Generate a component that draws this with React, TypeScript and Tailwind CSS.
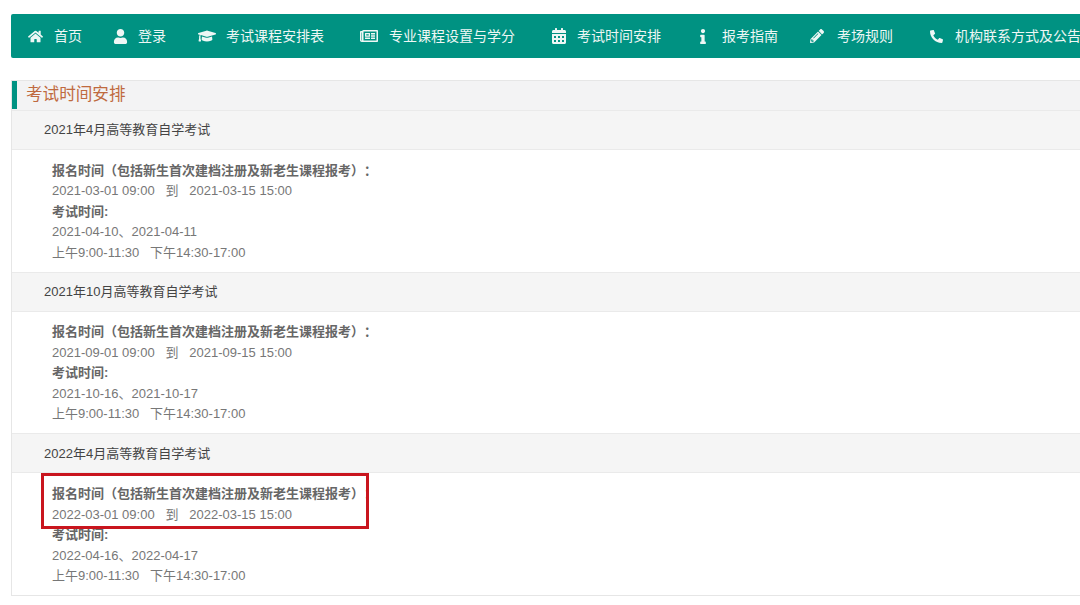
import { FaCalendarAlt, FaGraduationCap, FaHome, FaInfo, FaPencilAlt, FaPhone, FaRegNewspaper, FaUser } from 'react-icons/fa'
import type { ReactNode } from 'react'

const navItems: { label: string; icon: ReactNode; box: string }[] = [
  { label: '首页', icon: <FaHome className="size-[15px]" />, box: 'w-[102px] pl-[17px] gap-[11px]' },
  { label: '登录', icon: <FaUser className="size-[15px]" />, box: 'w-[85px] gap-[10px]' },
  { label: '考试课程安排表', icon: <FaGraduationCap className="size-[18px]" />, box: 'w-[162px] gap-[10px]' },
  { label: '专业课程设置与学分', icon: <FaRegNewspaper className="size-[18px]" />, box: 'w-[191px] gap-[11px]' },
  { label: '考试时间安排', icon: <FaCalendarAlt className="size-[16px]" />, box: 'w-[149px] gap-[10px]' },
  { label: '报考指南', icon: <FaInfo className="h-[15px] w-[6px]" />, box: 'w-[110px] gap-[16px]' },
  { label: '考场规则', icon: <FaPencilAlt className="size-[14px]" />, box: 'w-[120px] gap-[13px]' },
  { label: '机构联系方式及公告', icon: <FaPhone className="size-[13px] -scale-x-100" />, box: 'w-[160px] gap-[12px]' },
]

const sessions = [
  { title: '2021年4月高等教育自学考试', signup: '2021-03-01 09:00   到   2021-03-15 15:00', exam: '2021-04-10、2021-04-11' },
  { title: '2021年10月高等教育自学考试', signup: '2021-09-01 09:00   到   2021-09-15 15:00', exam: '2021-10-16、2021-10-17' },
  { title: '2022年4月高等教育自学考试', signup: '2022-03-01 09:00   到   2022-03-15 15:00', exam: '2022-04-16、2022-04-17', marked: true },
]

function App() {
  return (
    <div className="h-[605px] w-[1080px] overflow-hidden bg-white pl-[11px] pt-[14px] font-['Liberation_Sans','Noto_Sans_CJK_SC',sans-serif]">
      <div className="w-[1100px]">
        <nav className="flex h-[44px] items-center whitespace-nowrap rounded-[2px] bg-[#009282] text-[14px] text-[#eef7f5]">
          {navItems.map((item) => (
            <a key={item.label} className={`flex shrink-0 items-center ${item.box}`}>
              {item.icon}
              <span>{item.label}</span>
            </a>
          ))}
        </nav>

        <section className="mt-[22px] border border-[#e6e6e6] text-[13px] text-[#777]">
          <div className="flex h-[29px] bg-[#f3f3f4]">
            <h2 className="flex h-[28px] items-center border-l-[5px] border-[#009282] pl-[9px] pt-[1px] text-[16.6px] font-normal text-[#bf6a3f]">
              考试时间安排
            </h2>
          </div>
          {sessions.map((s) => (
            <div key={s.title}>
              <div className="flex h-[40px] items-center border-y border-[#eaeaea] bg-[#f5f5f5] pl-[32px] pt-[0.2px] text-[#444]">
                {s.title}
              </div>
              <div className="relative h-[121.6px] whitespace-pre bg-white pl-[40px] pt-[10.85px] leading-[20.5px] [text-spacing-trim:space-all]">
                <div className="font-bold text-[#666]">报名时间（包括新生首次建档注册及新老生课程报考）：</div>
                <div>{s.signup}</div>
                <div className="font-bold text-[#666]">考试时间:</div>
                <div>{s.exam}</div>
                <div>上午9:00-11:30   下午14:30-17:00</div>
                {s.marked && (
                  <div className="absolute left-[29px] top-0 h-[56px] w-[328px] border-[3px] border-[#c9151e]" />
                )}
              </div>
            </div>
          ))}
        </section>
      </div>
    </div>
  )
}

export default App
